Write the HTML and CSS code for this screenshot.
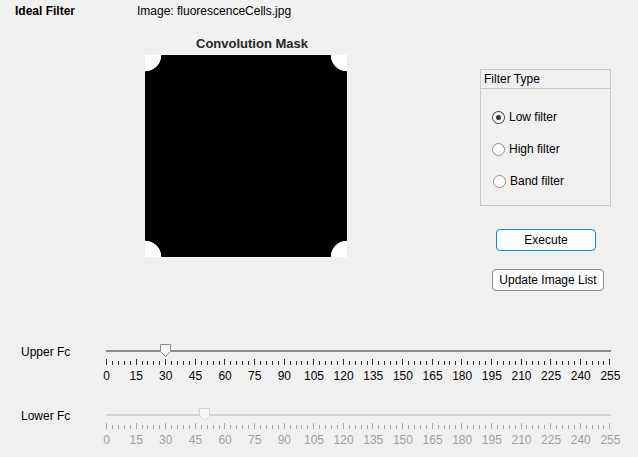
FILE: index.html
```html
<!DOCTYPE html>
<html>
<head>
<meta charset="utf-8">
<link rel="stylesheet" href="styles.css">
</head>
<body>
<div class="app">
  <div class="header">
    <div class="app-title">Ideal Filter</div>
    <div class="image-name">Image: fluorescenceCells.jpg</div>
  </div>
  <div class="main">
    <div class="mask-col">
      <div class="mask-title">Convolution Mask</div>
      <div class="mask"></div>
    </div>
    <div class="side">
      <div class="panel">
        <div class="panel-title">Filter Type</div>
        <div class="panel-body">
          <label class="radio"><span class="dot checked"></span>Low filter</label>
          <label class="radio"><span class="dot"></span>High filter</label>
          <label class="radio radio-shift"><span class="dot"></span>Band filter</label>
        </div>
      </div>
      <div class="btn btn-primary">Execute</div>
      <div class="btn btn-update">Update Image List</div>
    </div>
  </div>
  <div class="sliders">
    <div class="slider-row first">
      <div class="slider-label">Upper Fc</div>
      <div class="slider">
        <div class="rail">
          <div class="track"></div>
          <svg class="thumb" style="left:54px" width="11" height="13" viewBox="0 0 11 13"><path d="M0.5 0.5 H10.5 V7.5 L5.5 12.5 L0.5 7.5 Z" fill="#f7f7f7" stroke="#8a8a8a"/></svg>
        </div>
        <div class="ticks"><i class="mj"></i><i></i><i></i><i></i><i></i><i class="mj"></i><i></i><i></i><i></i><i></i><i class="mj"></i><i></i><i></i><i></i><i></i><i class="mj"></i><i></i><i></i><i></i><i></i><i class="mj"></i><i></i><i></i><i></i><i></i><i class="mj"></i><i></i><i></i><i></i><i></i><i class="mj"></i><i></i><i></i><i></i><i></i><i class="mj"></i><i></i><i></i><i></i><i></i><i class="mj"></i><i></i><i></i><i></i><i></i><i class="mj"></i><i></i><i></i><i></i><i></i><i class="mj"></i><i></i><i></i><i></i><i></i><i class="mj"></i><i></i><i></i><i></i><i></i><i class="mj"></i><i></i><i></i><i></i><i></i><i class="mj"></i><i></i><i></i><i></i><i></i><i class="mj"></i><i></i><i></i><i></i><i></i><i class="mj"></i><i></i><i></i><i></i><i></i><i class="mj"></i><i></i><i></i><i></i><i></i><i class="mj"></i></div>
        <div class="labels"><span>0</span><span>15</span><span>30</span><span>45</span><span>60</span><span>75</span><span>90</span><span>105</span><span>120</span><span>135</span><span>150</span><span>165</span><span>180</span><span>195</span><span>210</span><span>225</span><span>240</span><span>255</span></div>
      </div>
    </div>
    <div class="slider-row disabled">
      <div class="slider-label">Lower Fc</div>
      <div class="slider">
        <div class="rail">
          <div class="track"></div>
          <svg class="thumb" style="left:93px" width="11" height="13" viewBox="0 0 11 13"><path d="M0.5 0.5 H10.5 V7.5 L5.5 12.5 L0.5 7.5 Z" fill="#f7f7f7" stroke="#d2d2d2"/></svg>
        </div>
        <div class="ticks"><i class="mj"></i><i></i><i></i><i></i><i></i><i class="mj"></i><i></i><i></i><i></i><i></i><i class="mj"></i><i></i><i></i><i></i><i></i><i class="mj"></i><i></i><i></i><i></i><i></i><i class="mj"></i><i></i><i></i><i></i><i></i><i class="mj"></i><i></i><i></i><i></i><i></i><i class="mj"></i><i></i><i></i><i></i><i></i><i class="mj"></i><i></i><i></i><i></i><i></i><i class="mj"></i><i></i><i></i><i></i><i></i><i class="mj"></i><i></i><i></i><i></i><i></i><i class="mj"></i><i></i><i></i><i></i><i></i><i class="mj"></i><i></i><i></i><i></i><i></i><i class="mj"></i><i></i><i></i><i></i><i></i><i class="mj"></i><i></i><i></i><i></i><i></i><i class="mj"></i><i></i><i></i><i></i><i></i><i class="mj"></i><i></i><i></i><i></i><i></i><i class="mj"></i><i></i><i></i><i></i><i></i><i class="mj"></i></div>
        <div class="labels"><span>0</span><span>15</span><span>30</span><span>45</span><span>60</span><span>75</span><span>90</span><span>105</span><span>120</span><span>135</span><span>150</span><span>165</span><span>180</span><span>195</span><span>210</span><span>225</span><span>240</span><span>255</span></div>
      </div>
    </div>
  </div>
</div>
</body>
</html>
```
FILE: styles.css
```css
* { box-sizing: border-box; }
html, body { margin: 0; padding: 0; }
body {
  background: #f0f0f0;
  font-family: "Liberation Sans", Arial, sans-serif;
  font-size: 12px;
  color: #000;
}
.app {
  width: 638px;
  height: 457px;
  overflow: hidden;
}
.header {
  display: flex;
  height: 22px;
  padding: 3px 0 0 15px;
  line-height: 16px;
}
.app-title {
  width: 122px;
  font-weight: bold;
}
.main {
  display: flex;
  height: 322px;
  padding-top: 14px;
}
.mask-col {
  margin-left: 145px;
  width: 202px;
}
.mask-title {
  font-weight: bold;
  font-size: 13px;
  line-height: 15px;
  text-align: center;
  padding-left: 12px;
  color: #262626;
}
.mask {
  margin-top: 4px;
  width: 202px;
  height: 202px;
  background:
    radial-gradient(circle at 0 0, #fff 16px, rgba(255,255,255,0) 16.6px),
    radial-gradient(circle at 100% 0, #fff 16px, rgba(255,255,255,0) 16.6px),
    radial-gradient(circle at 0 100%, #fff 16px, rgba(255,255,255,0) 16.6px),
    radial-gradient(circle at 100% 100%, #fff 16px, rgba(255,255,255,0) 16.6px),
    #000;
}
.side {
  margin-left: 133px;
  margin-top: 33px;
  width: 131px;
  display: flex;
  flex-direction: column;
  align-items: flex-start;
}
.panel {
  width: 131px;
  border: 1px solid #c8c8c8;
}
.panel-title {
  height: 19px;
  line-height: 18px;
  padding-left: 3px;
  border-bottom: 1px solid #c8c8c8;
}
.panel-body {
  display: flex;
  flex-direction: column;
  gap: 12px;
  padding: 18px 0 14px 11px;
}
.radio {
  display: flex;
  align-items: center;
  gap: 4px;
  height: 20px;
}
.radio-shift { margin-left: 1px; }
.dot {
  width: 13px;
  height: 13px;
  border-radius: 50%;
  border: 1px solid #8f8f8f;
  background: #fff;
  display: flex;
  align-items: center;
  justify-content: center;
}
.dot.checked { border-color: #333; }
.dot.checked::after {
  content: "";
  width: 5px;
  height: 5px;
  border-radius: 50%;
  background: #333;
}
.btn {
  height: 22px;
  line-height: 20px;
  text-align: center;
  background: #fcfcfc;
  border: 1px solid #adadad;
  border-radius: 4px;
}
.btn-primary {
  width: 100px;
  margin: 23px 0 0 16px;
  border-color: #0a84e0;
}
.btn-update {
  width: 112px;
  margin: 18px 0 0 12px;
  border-color: #8f8f8f;
}
.sliders {
  display: flex;
  flex-direction: column;
}
.slider-row {
  display: flex;
  padding-left: 21px;
}
.slider-row.first { height: 64px; }
.slider-label {
  width: 85px;
  padding-top: 1px;
  line-height: 14px;
}
.slider { width: 505px; }
.rail {
  position: relative;
  height: 15px;
  padding-top: 6px;
}
.track {
  height: 2px;
  background: #8c8c8c;
}
.thumb {
  position: absolute;
  top: 0;
  display: block;
}
.ticks {
  display: flex;
  justify-content: space-between;
  align-items: flex-end;
  height: 6px;
}
.ticks i {
  display: block;
  width: 1px;
  height: 4px;
  background: #333;
}
.ticks i.mj { height: 6px; }
.labels {
  display: flex;
  justify-content: space-between;
  margin-top: 4px;
  line-height: 14px;
}
.labels span {
  width: 1px;
  display: flex;
  justify-content: center;
  white-space: nowrap;
}
.disabled .track { background: #d4d4d4; }
.disabled .ticks i { background: #a8a8a8; }
.disabled .labels { color: #a0a0a0; }
```
